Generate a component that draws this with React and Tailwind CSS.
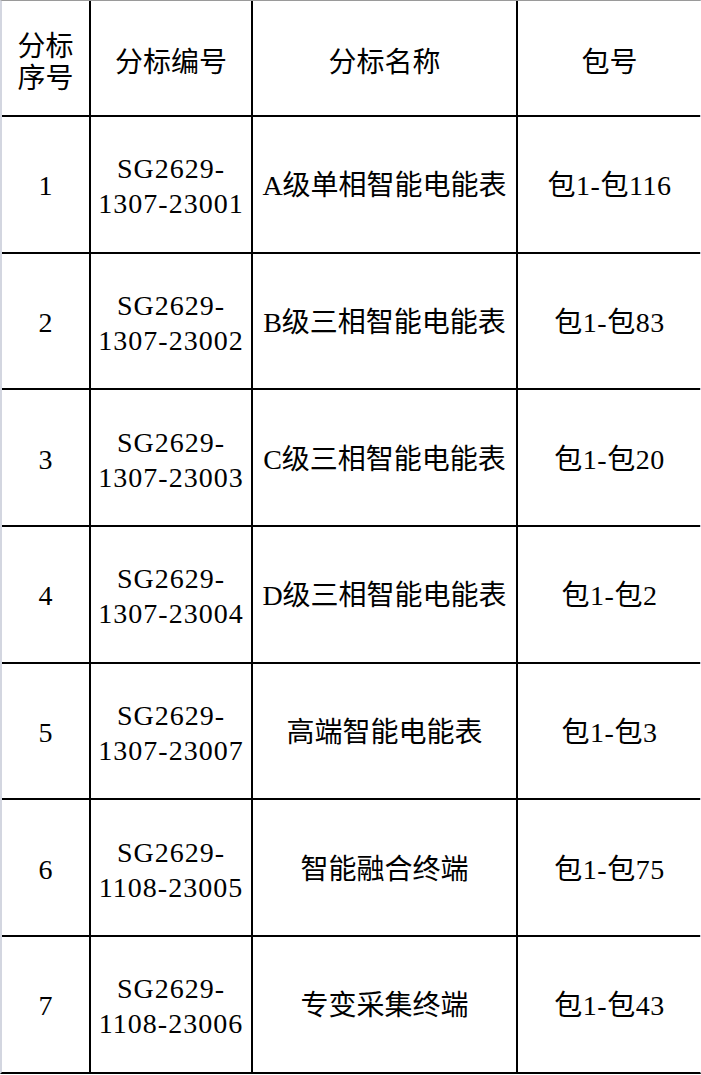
const rows = [
  { no: "1", code: ["SG2629-", "1307-23001"], name: "A级单相智能电能表", pkg: "包1-包116" },
  { no: "2", code: ["SG2629-", "1307-23002"], name: "B级三相智能电能表", pkg: "包1-包83" },
  { no: "3", code: ["SG2629-", "1307-23003"], name: "C级三相智能电能表", pkg: "包1-包20" },
  { no: "4", code: ["SG2629-", "1307-23004"], name: "D级三相智能电能表", pkg: "包1-包2" },
  { no: "5", code: ["SG2629-", "1307-23007"], name: "高端智能电能表", pkg: "包1-包3" },
  { no: "6", code: ["SG2629-", "1108-23005"], name: "智能融合终端", pkg: "包1-包75" },
  { no: "7", code: ["SG2629-", "1108-23006"], name: "专变采集终端", pkg: "包1-包43" },
];

function Cell({ children, className = "" }) {
  return (
    <div className={`bg-white flex items-center justify-center text-center ${className}`}>
      {children}
    </div>
  );
}

export default function App() {
  return (
    <div className="w-[701px] h-[1075px] bg-white font-['Liberation_Serif','Noto_Sans_CJK_SC',serif] text-[28px] text-black">
      <div className="border-t border-t-[#9a9a9a] border-l-2 border-l-[#d3d6e0] border-r border-r-[#c4c7d2] border-b-2 border-b-black">
        <div className="grid grid-cols-[87px_160px_263px_183px] grid-rows-[114px_repeat(7,134.7px)] gap-[2px] bg-black">
          <Cell className="leading-[32px] pt-[9px]">
            <span>
              分标
              <br />
              序号
            </span>
          </Cell>
          <Cell className="pt-[9px]">分标编号</Cell>
          <Cell className="pt-[9px]">分标名称</Cell>
          <Cell className="pt-[9px]">包号</Cell>
          {rows.map((r) => (
            <div key={r.no} className="contents">
              <Cell className="pt-[4px]">{r.no}</Cell>
              <Cell className="pt-[4px] leading-[35px] tracking-[1px]">
                <span>
                  {r.code[0]}
                  <br />
                  {r.code[1]}
                </span>
              </Cell>
              <Cell className="pt-[4px]">{r.name}</Cell>
              <Cell className="pt-[4px] tracking-[0.5px]">{r.pkg}</Cell>
            </div>
          ))}
        </div>
      </div>
    </div>
  );
}
